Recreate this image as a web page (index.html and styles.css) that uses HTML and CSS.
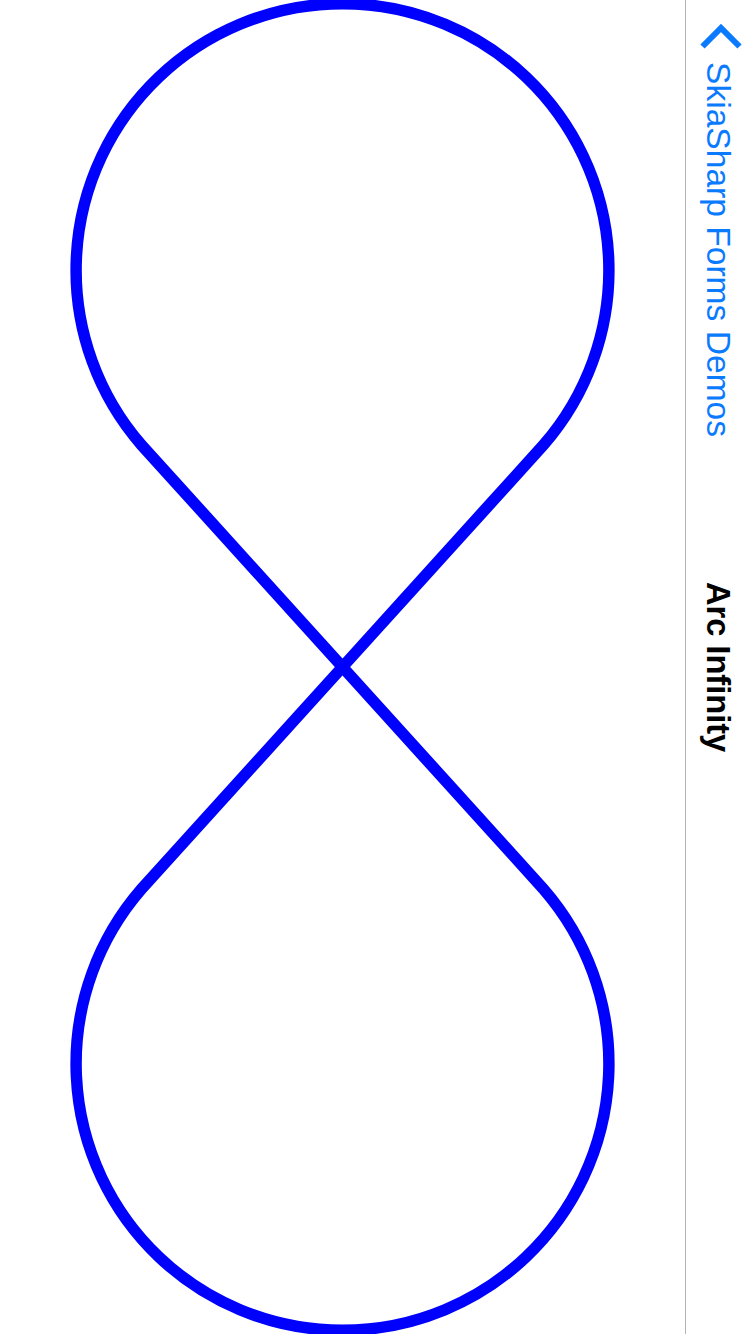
FILE: index.html
```
<!DOCTYPE html>
<html>
<head>
<meta charset="utf-8">
<link rel="stylesheet" href="styles.css">
</head>
<body>
<div class="screen">
  <header class="navbar">
    <div class="back">
      <svg class="chevron" width="44" height="28" viewBox="0 0 44 28">
        <path d="M3.5 24.5 L22 6 L40.5 24.5" fill="none" stroke="#0a7aff" stroke-width="6"/>
      </svg>
      <span class="back-label">SkiaSharp Forms Demos</span>
    </div>
    <h1 class="title">Arc Infinity</h1>
    <div class="spacer"></div>
  </header>
  <main class="canvas">
    <svg width="685" height="1334" viewBox="0 0 685 1334">
      <g transform="translate(342.5 667) rotate(90) scale(2.664)">
        <path d="M0 0 L83.4 75.5 A100 100 0 1 0 83.4 -75.5 L-83.4 75.5 A100 100 0 1 1 -83.4 -75.5 Z" fill="none" stroke="#0000ff" stroke-width="4.3" stroke-linejoin="miter"/>
      </g>
    </svg>
  </main>
</div>
</body>
</html>
```
FILE: styles.css
```
html, body {
  margin: 0;
  padding: 0;
  width: 750px;
  height: 1334px;
  overflow: hidden;
  background: #ffffff;
}

.screen {
  writing-mode: vertical-rl;
  width: 750px;
  height: 1334px;
  display: flex;
  flex-direction: column;
  background: #ffffff;
  font-family: "Liberation Sans", Arial, sans-serif;
}

.navbar {
  width: 64px;
  flex: none;
  border-left: 1px solid #b2b2b2;
  background: #ffffff;
  display: grid;
  grid-template-columns: 1fr auto 1fr;
  align-items: center;
}

.back {
  display: flex;
  align-items: center;
  gap: 12px;
  padding-top: 22px;
  color: #0a7aff;
}

.chevron {
  display: block;
  margin-left: 6px;
}

.back-label {
  font-size: 33.6px;
  line-height: 1;
  white-space: nowrap;
}

.title {
  margin: 0;
  font-size: 32.6px;
  font-weight: bold;
  line-height: 1;
  color: #000000;
  white-space: nowrap;
}

.canvas {
  flex: 1;
  overflow: hidden;
  background: #ffffff;
}

.canvas svg {
  display: block;
}
```
